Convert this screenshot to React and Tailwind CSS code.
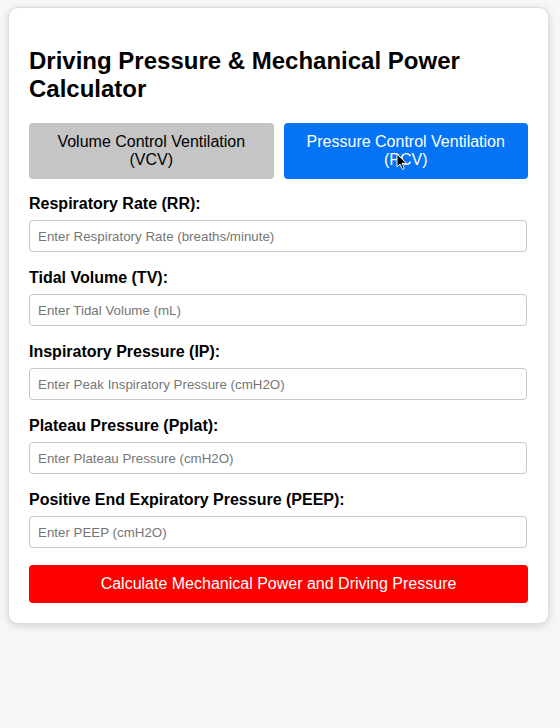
import React from 'react';

const fields = [
    { label: 'Respiratory Rate (RR):', placeholder: 'Enter Respiratory Rate (breaths/minute)' },
    { label: 'Tidal Volume (TV):', placeholder: 'Enter Tidal Volume (mL)' },
    { label: 'Inspiratory Pressure (IP):', placeholder: 'Enter Peak Inspiratory Pressure (cmH2O)' },
    { label: 'Plateau Pressure (Pplat):', placeholder: 'Enter Plateau Pressure (cmH2O)' },
    { label: 'Positive End Expiratory Pressure (PEEP):', placeholder: 'Enter PEEP (cmH2O)' },
];

export default function App() {
    return (
        <div className="min-h-[728px] bg-[#f7f7f7] pt-[7px] font-['Liberation_Sans',Arial,sans-serif] text-black">
            <div className="ml-2 w-[541px] rounded-[10px] border border-[#dcdcdc] bg-white px-5 pt-5 pb-5 shadow-[0_2px_8px_rgba(0,0,0,0.15)]">
                <h2 className="mt-[19px] mb-5 text-[24px] font-bold leading-[28px]">
                    Driving Pressure &amp; Mechanical Power Calculator
                </h2>

                <div className="mb-4 flex gap-[10px]">
                    <button className="h-[56px] flex-1 rounded-[4px] bg-[#c5c5c5] px-3 text-[16px] leading-[18px] text-black">
                        Volume Control Ventilation (VCV)
                    </button>
                    <button className="relative h-[56px] flex-1 rounded-[4px] bg-[#0573f5] px-3 text-[16px] leading-[18px] text-white">
                        Pressure Control Ventilation (PCV)
                        {/* mouse pointer captured in the screenshot */}
                        <svg className="absolute left-[112px] top-[30px]" width="12" height="18" viewBox="0 0 12 18">
                            <path d="M1 1 L1 14 L4 11 L6.5 16.5 L8.5 15.6 L6 10.3 L10.5 10.3 Z" fill="#000" stroke="#fff" strokeWidth="1" strokeLinejoin="round" />
                        </svg>
                    </button>
                </div>

                {fields.map((f) => (
                    <div key={f.label} className="mb-[17px] last:mb-[15px]">
                        <label className="mb-[7px] block text-[16px] font-bold leading-[18px]">{f.label}</label>
                        <input
                            type="text"
                            placeholder={f.placeholder}
                            className="block h-[32px] w-[498px] rounded-[4px] border border-[#c8c8c8] bg-white px-2 text-[13.33px] placeholder:text-[#767676] outline-none"
                        />
                    </div>
                ))}

                <button className="h-[38px] w-full rounded-[4px] bg-[#ff0000] text-[16px] text-white">
                    Calculate Mechanical Power and Driving Pressure
                </button>
            </div>
        </div>
    );
}
